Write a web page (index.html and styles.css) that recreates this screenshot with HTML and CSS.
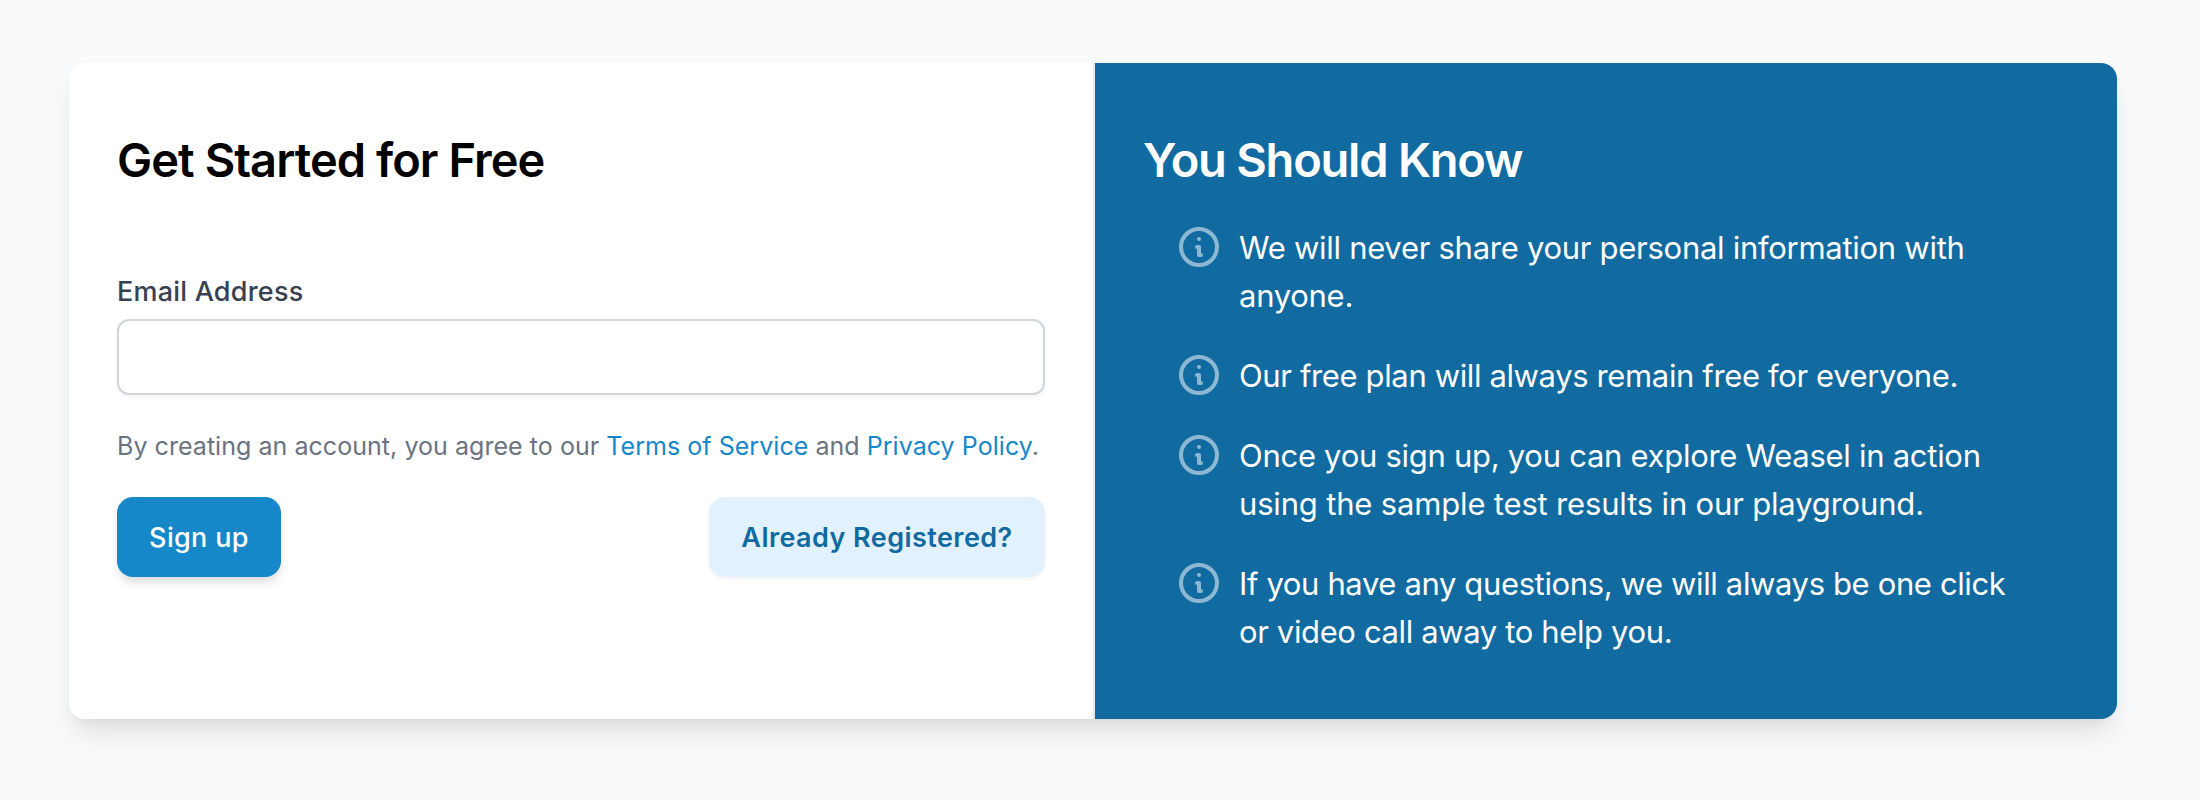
FILE: index.html
```
<!DOCTYPE html>
<html lang="en">
<head>
<meta charset="utf-8">
<title>Sign up</title>
<link rel="stylesheet" href="styles.css">
</head>
<body>
<main class="card">
  <section class="signup">
    <h2 class="title">Get Started for Free</h2>
    <form class="form">
      <label class="label" for="email">Email Address</label>
      <input class="input" id="email" type="email">
      <p class="terms">By creating an account, you agree to our <a class="link" href="#">Terms of Service</a> and <a class="link" href="#">Privacy Policy</a>.</p>
      <div class="actions">
        <button class="btn btn-primary" type="button">Sign up</button>
        <a class="btn btn-secondary" href="#">Already Registered?</a>
      </div>
    </form>
  </section>
  <section class="info">
    <h2 class="title title-info">You Should Know</h2>
    <ul class="list">
      <li class="item"><svg class="icon" viewBox="0 0 24 24"><path d="M13 16h-1v-4h-1m1-4h.01M21 12a9 9 0 11-18 0 9 9 0 0118 0z"/></svg><span class="item-text">We will never share your personal information with<br>anyone.</span></li>
      <li class="item"><svg class="icon" viewBox="0 0 24 24"><path d="M13 16h-1v-4h-1m1-4h.01M21 12a9 9 0 11-18 0 9 9 0 0118 0z"/></svg><span class="item-text tight">Our free plan will always remain free for everyone.</span></li>
      <li class="item"><svg class="icon" viewBox="0 0 24 24"><path d="M13 16h-1v-4h-1m1-4h.01M21 12a9 9 0 11-18 0 9 9 0 0118 0z"/></svg><span class="item-text">Once you sign up, you can explore Weasel in action<br><span class="loose">using the sample test results in our playground.</span></span></li>
      <li class="item"><svg class="icon" viewBox="0 0 24 24"><path d="M13 16h-1v-4h-1m1-4h.01M21 12a9 9 0 11-18 0 9 9 0 0118 0z"/></svg><span class="item-text tight">If you have any questions, we will always be one click<br>or video call away to help you.</span></li>
    </ul>
  </section>
</main>
</body>
</html>
```
FILE: styles.css
```
* { box-sizing: border-box; margin: 0; padding: 0; }

body {
  height: 800px;
  padding: 63px 83px 0 69px;
  overflow: hidden;
  background: #f9fafc;
  font-family: Inter, "Liberation Sans", sans-serif;
}

.card {
  display: grid;
  grid-template-columns: 1fr 1fr;
  height: 656px;
  overflow: hidden;
  border-radius: 16px;
  background: #fff;
  box-shadow: 0 20px 30px -6px rgba(0, 0, 0, 0.1), 0 8px 12px -4px rgba(0, 0, 0, 0.05);
}

.signup { padding: 64px 48px; }

.info {
  padding: 64px 48px;
  border-left: 2px solid #e5e7eb;
  background: #116aa0;
  background-clip: padding-box;
  color: #fff;
}

.title {
  height: 64px;
  padding-top: 1px;
  font-size: 47px;
  font-weight: 600;
  letter-spacing: -0.95px;
  line-height: 64px;
}

.title-info { letter-spacing: -1.22px; }

.form {
  display: flex;
  flex-direction: column;
  padding-top: 80px;
}

.label {
  height: 40px;
  padding-top: 1px;
  color: #374151;
  font-size: 27px;
  font-weight: 500;
  letter-spacing: 0.22px;
  line-height: 40px;
}

.input {
  height: 76px;
  margin-top: 8px;
  border: 2px solid #d1d5db;
  border-radius: 12px;
  background: #fff;
  box-shadow: 0 2px 4px rgba(0, 0, 0, 0.05);
}

.terms {
  margin: 32px 0;
  color: #6b7280;
  font-size: 25px;
  letter-spacing: 0.045px;
  line-height: 38px;
  white-space: nowrap;
}

.link { color: #1687c8; text-decoration: none; }

.actions { display: flex; justify-content: space-between; }

.btn {
  display: flex;
  align-items: center;
  justify-content: center;
  height: 80px;
  border: 0;
  border-radius: 16px;
  font-family: inherit;
  font-size: 27px;
  letter-spacing: 0.35px;
  text-decoration: none;
  white-space: nowrap;
}

.btn-primary {
  width: 164px;
  background: #1687c8;
  color: #fff;
  font-weight: 500;
  box-shadow: 0 8px 12px -2px rgba(0, 0, 0, 0.1), 0 4px 8px -2px rgba(0, 0, 0, 0.06);
}

.btn-secondary {
  width: 336px;
  background: #e1f1fe;
  color: #116aa0;
  font-weight: 600;
  letter-spacing: 0.43px;
  box-shadow: 0 2px 4px rgba(0, 0, 0, 0.05);
}

.list {
  display: flex;
  flex-direction: column;
  gap: 32px;
  padding: 32px 0 0 32px;
  list-style: none;
}

.item {
  display: flex;
  gap: 16px;
  font-size: 31px;
  line-height: 48px;
  white-space: nowrap;
}

.item-text {
  margin-bottom: -1px;
  padding-top: 1px;
  letter-spacing: -0.28px;
}

.tight { letter-spacing: -0.37px; }

.loose { letter-spacing: -0.17px; }

.icon {
  flex: none;
  width: 48px;
  height: 48px;
  fill: none;
  stroke: #8cb8d2;
  stroke-width: 2;
  stroke-linecap: round;
  stroke-linejoin: round;
}
```
